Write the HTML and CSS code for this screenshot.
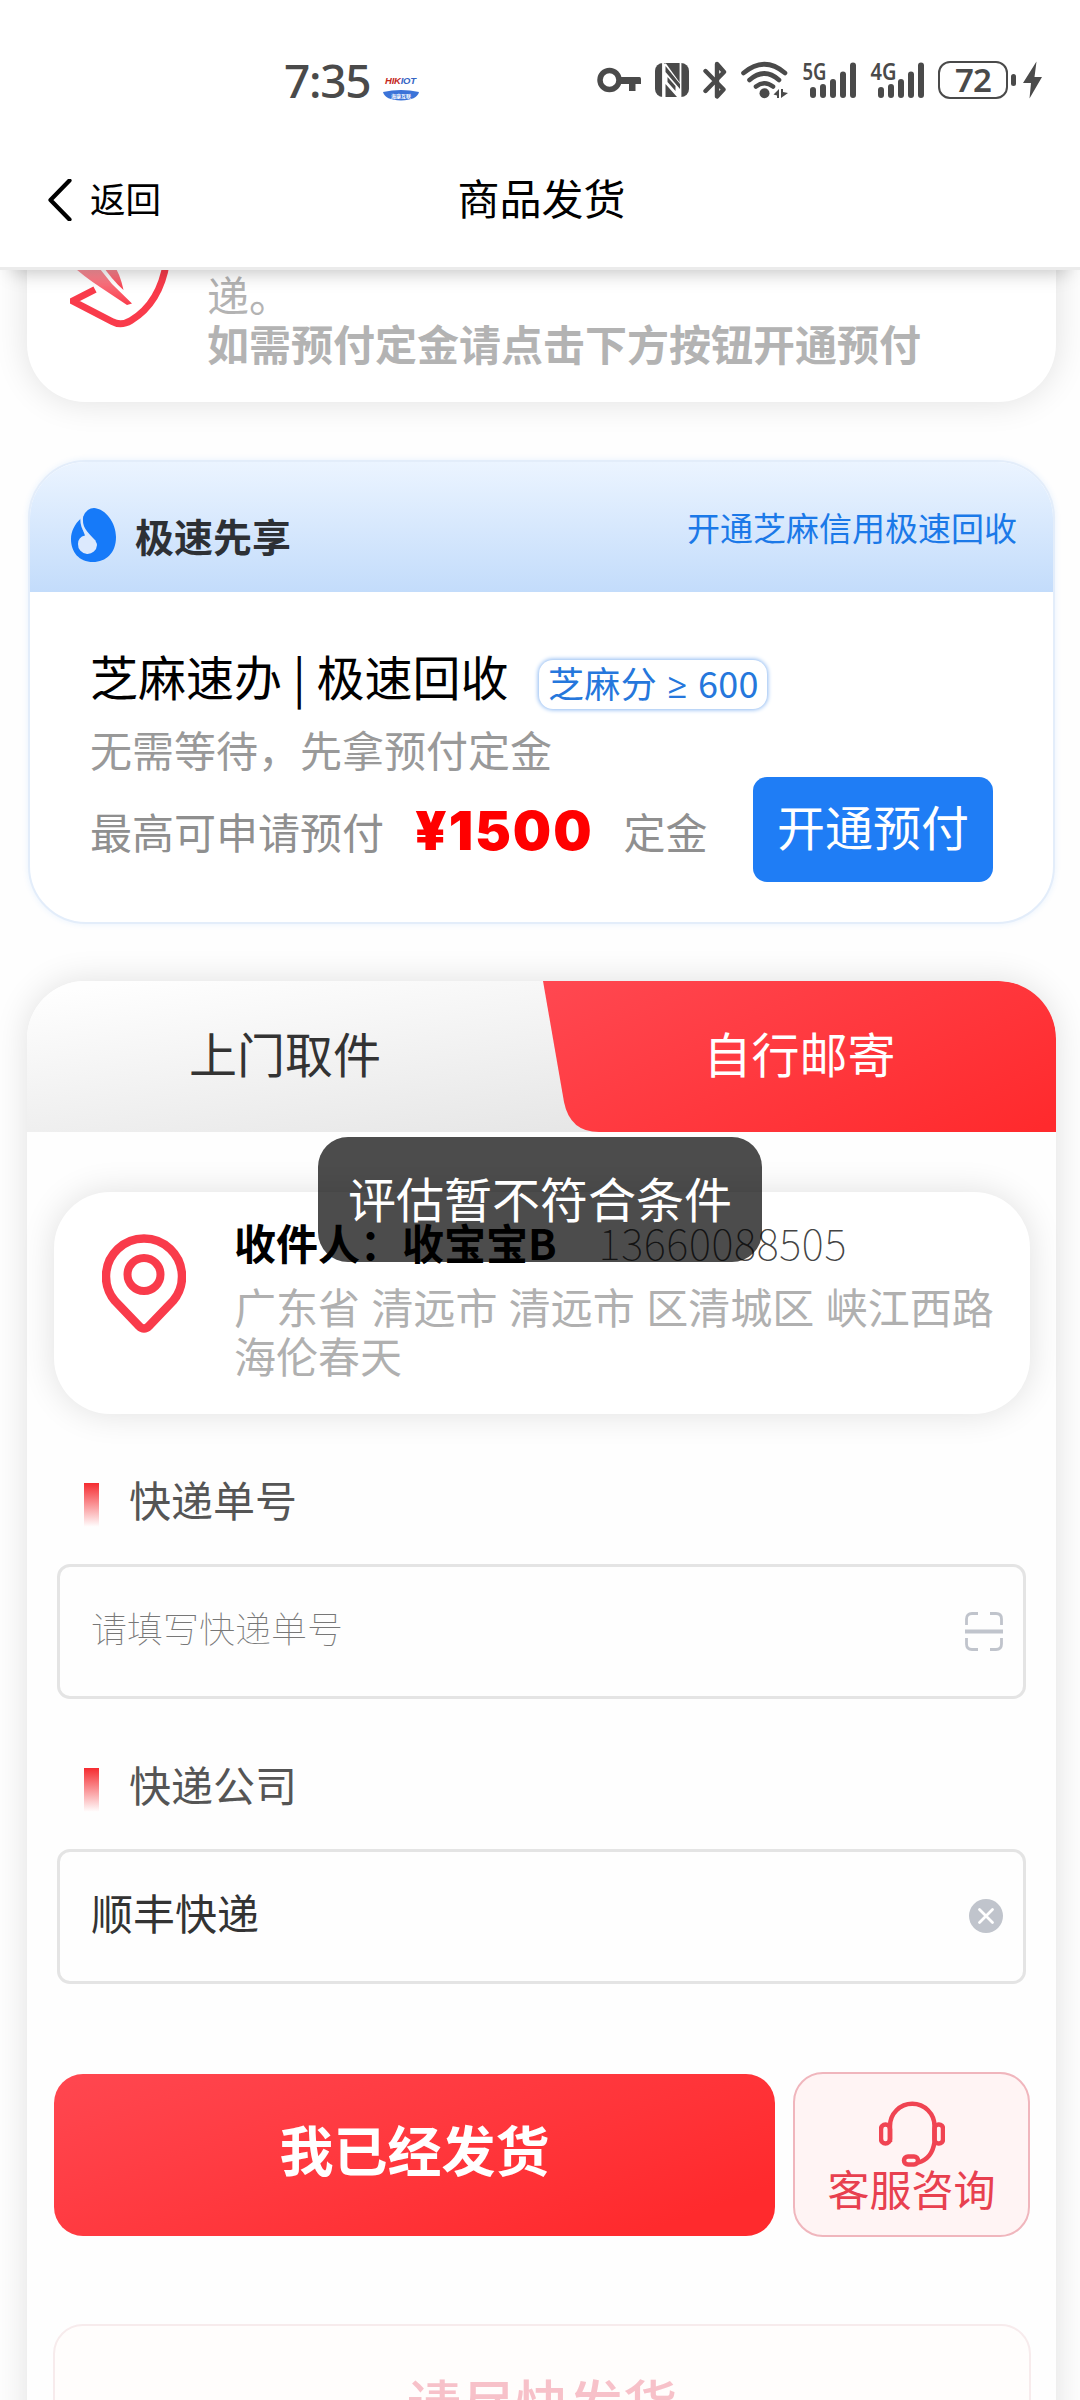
FILE: index.html
```html
<!DOCTYPE html>
<html lang="zh-CN">
<head>
<meta charset="utf-8">
<title>商品发货</title>
<link rel="stylesheet" href="styles.css">
</head>
<body>
<header class="header">
  <div class="status">
    <span class="time">7:35</span>
    <svg class="app" width="36" height="26" viewBox="0 0 36 26">
      <text x="2" y="9" class="app-name" textLength="31"><tspan fill="#c4281c">HIK</tspan><tspan fill="#3565c4">IOT</tspan></text>
      <path d="M0 17Q18 13 36 17Q34 25 18 25.500Q2 25 0 17Z" fill="#3b73d8"/>
      <text x="8" y="22.500" class="app-sub">海康互联</text>
    </svg>
    <div class="indicators">
      <svg width="44" height="38" viewBox="597 61 44 38"><circle cx="609.500" cy="80" r="9.500" fill="none" stroke="#4a4a4a" stroke-width="5.500"/><path d="M620 77H639.500Q641 77 641 79V84H635.500V91H629V84H620Z" fill="#4a4a4a"/></svg>
      <svg width="34" height="38" viewBox="655 61 34 38"><rect x="655" y="63" width="34" height="34" rx="8" fill="#4a4a4a"/><path d="M663 63V97M680.500 63V97" stroke="#fff" stroke-width="1.800"/><path d="M663 63.500L666 63.500L680 83V97L677 97L665.500 84V97L663 97Z" fill="#fff"/><path d="M665.500 66L680 84V89L665.500 72ZM667.500 77L675.500 86V91L667.500 82Z" fill="#4a4a4a"/></svg>
      <svg width="24" height="38" viewBox="703 61 24 38"><path d="M705.500 71L723.500 89.500L717 96.500V64L724 72L705.500 91" fill="none" stroke="#4a4a4a" stroke-width="4.400" stroke-linejoin="round" stroke-linecap="round"/></svg>
      <svg width="47" height="38" viewBox="741 61 47 38"><g fill="none" stroke="#4a4a4a" stroke-width="4.600" stroke-linecap="round"><path d="M743.500 73Q764.500 55.500 785 73"/><path d="M749.500 80Q764.500 67 779 80"/><path d="M756 86.500Q764.500 80 773 86.500"/></g><circle cx="764.500" cy="93.200" r="5" fill="#4a4a4a"/><path d="M779 89V98H777V95.500L773.500 94.500Z M781 98V89H783V92L788 93Z" fill="#4a4a4a"/></svg>
      <svg class="signal" width="54" height="38" viewBox="802 61 54 38"><text x="802.500" y="80" textLength="24" lengthAdjust="spacingAndGlyphs">5G</text><path d="M813 90V95M823 87V95M833 82V95M843 74.500V95M853 65.500V95"/></svg>
      <svg class="signal" width="54" height="38" viewBox="802 61 54 38"><text x="802.500" y="80" textLength="26" lengthAdjust="spacingAndGlyphs">4G</text><path d="M813 90V95M823 87V95M833 82V95M843 74.500V95M853 65.500V95"/></svg>
      <div class="battery"><span class="cell">72</span><i class="nub"></i><svg width="19" height="38" viewBox="1023 61 19 38"><path d="M1036.500 61.500L1023 83H1031L1029.500 98.500L1042 77H1034.500Z" fill="#4a4a4a"/></svg></div>
    </div>
  </div>
  <nav class="nav">
    <a class="back"><svg width="24" height="42" viewBox="0 0 24 42"><path d="M21.500 1.500L2.500 21L21.500 40.500" fill="none" stroke="#000" stroke-width="4.200" stroke-linecap="round" stroke-linejoin="round"/></svg>返回</a>
    <h1 class="title">商品发货</h1>
  </nav>
</header>
<main class="main">
  <section class="card notice">
    <svg class="leaf" width="102" height="70" viewBox="70 260 102 70">
      <defs><linearGradient id="lg" x1="0" y1="0" x2="0" y2="1"><stop offset="0" stop-color="#fba6ae"/><stop offset="1" stop-color="#f93b4b"/></linearGradient></defs>
      <path d="M95 289.500L72.500 301L112 321.500Q121 326.500 131 320.500Q160 303 166.500 262" fill="none" stroke="#f93b4b" stroke-width="7" stroke-linejoin="round"/>
      <path d="M68 262L96 264L112 284L132 303.500L127 305L100 287Q84 277 68 262Z" fill="url(#lg)"/>
      <path d="M100 262H112Q120 273 123.500 290Q112 280 100 262Z" fill="url(#lg)"/>
    </svg>
    <p class="notice-text">递。<br><b>如需预付定金请点击下方按钮开通预付</b></p>
  </section>

  <section class="prepay">
    <div class="prepay-head">
      <svg width="45" height="54" viewBox="0 0 45 54"><path d="M9.300 11L12.500 8Q16 0 23 0C35 1 45 15 45 29C45 45 35 54 22 54C8 54 0 44 0 31C0 23 4 16 9.300 11Z" fill="#167af9"/><path d="M11 7C9 19 14 24 24 34" fill="none" stroke="#dce9fd" stroke-width="2.600"/><path d="M11.500 21Q17 28 22 31Q26 34 26 37A9.500 9.500 0 1 1 7 36Q7 29 14 27.500Z" fill="#dce9fd"/></svg>
      <b class="prepay-name">极速先享</b>
      <a class="prepay-link">开通芝麻信用极速回收</a>
    </div>
    <div class="prepay-body">
      <div class="prepay-title">芝麻速办 | 极速回收<span class="score">芝麻分 <span class="gte">≥</span> 600</span></div>
      <p class="prepay-sub">无需等待，先拿预付定金</p>
      <div class="prepay-row"><span class="grey">最高可申请预付</span><b class="amount">¥1500</b><span class="grey">定金</span><button class="open">开通预付</button></div>
    </div>
  </section>

  <section class="ship">
    <div class="tabs">
      <div class="tab">上门取件</div>
      <div class="tab tab-on"><svg class="tab-bg" width="513" height="151" viewBox="0 0 513 151"><defs><linearGradient id="red" gradientUnits="userSpaceOnUse" x1="20" y1="0" x2="167" y2="306"><stop offset="0" stop-color="#ff4750"/><stop offset="1" stop-color="#ff2a2d"/></linearGradient></defs><path d="M0 0H457A56 56 0 0 1 513 56V151H56Q27 151 21 121Z" fill="url(#red)"/></svg><span class="tab-label">自行邮寄</span></div>
    </div>
    <div class="ship-body">
      <div class="address">
        <svg class="pin" width="84" height="102" viewBox="0 0 84 102"><path d="M37 95L13 70A38 38 0 1 1 71 70L47 95Q42 100 37 95Z" fill="none" stroke="#f93b4b" stroke-width="8.500"/><circle cx="42" cy="43.500" r="16.500" fill="none" stroke="#f93b4b" stroke-width="8"/></svg>
        <div>
          <div class="person"><b>收件人：收宝宝B</b><span class="phone">13660088505</span></div>
          <p class="where">广东省 清远市 清远市 区清城区 峡江西路<br>海伦春天</p>
        </div>
      </div>
      <div class="label">快递单号</div>
      <div class="field"><span class="placeholder">请填写快递单号</span>
        <svg width="38" height="39" viewBox="0 0 38 39"><path d="M1.500 13V7Q1.500 1.500 7 1.500H13M25 1.500H31Q36.500 1.500 36.500 7V13M1.500 26V32Q1.500 37.500 7 37.500H13M25 37.500H31Q36.500 37.500 36.500 32V26" fill="none" stroke="#c0c4cc" stroke-width="2.800"/><path d="M0 19.500H38" stroke="#c0c4cc" stroke-width="4"/></svg>
      </div>
      <div class="label">快递公司</div>
      <div class="field"><span>顺丰快递</span>
        <svg width="34" height="34" viewBox="0 0 34 34"><circle cx="17" cy="17" r="17" fill="#c0c4cc"/><path d="M10.500 10.500L23.500 23.500M23.500 10.500L10.500 23.500" stroke="#fff" stroke-width="2.800" stroke-linecap="round"/></svg>
      </div>
      <div class="actions">
        <button class="sent">我已经发货</button>
        <button class="service"><svg width="66" height="66" viewBox="0 0 66 66"><g fill="none" stroke="#f04452" stroke-width="4.500"><path d="M11 41V25A22 22 0 0 1 55.500 25V41Q53 58 39 61.500"/><rect x="2" y="23.500" width="9" height="19" rx="4.500"/><rect x="55.500" y="23.500" width="8.500" height="19" rx="4"/><rect x="25" y="55.500" width="14" height="8" rx="4"/></g></svg>客服咨询</button>
      </div>
      <div class="hurry">请尽快发货</div>
    </div>
  </section>
</main>
<div class="toast">评估暂不符合条件</div>
</body>
</html>
```

FILE: styles.css
```css
* { box-sizing: border-box; margin: 0; padding: 0; }
body {
  position: relative;
  width: 1080px;
  height: 2400px;
  overflow: hidden;
  background: #fefefe;
  color: #000;
  font-family: "Noto Sans CJK SC", sans-serif;
  font-size: 42px;
}
svg { display: block; flex: none; }
button { border: 0; font: inherit; }

.header {
  position: relative;
  z-index: 2;
  height: 270px;
  background: #fff;
  border-bottom: 3px solid #ebebeb;
  box-shadow: 0 14px 18px -12px rgba(0, 0, 0, .25);
}
.status { display: flex; height: 132px; padding: 61px 38px 0 284px; }
.time { width: 99px; height: 38px; font: 500 46px/38px "Noto Sans", sans-serif; letter-spacing: -1.3px; color: #4a4a4a; }
.app { margin-top: 14px; }
.app-name { font: italic bold 9.500px "Liberation Sans", sans-serif; }
.app-sub { font: bold 5px "Noto Sans CJK SC", sans-serif; fill: #fff; }
.indicators { display: flex; gap: 14px; margin-left: auto; height: 38px; }
.signal { overflow: visible; }
.signal text { font: 600 24px "Noto Sans", sans-serif; fill: #4a4a4a; }
.signal path { stroke: #4a4a4a; stroke-width: 6; stroke-linecap: round; }
.battery { display: flex; align-items: center; }
.cell { width: 70px; height: 38px; border: 2.500px solid #4a4a4a; border-radius: 12px; text-align: center; font: 600 33px/34px "Noto Sans", sans-serif; letter-spacing: -1px; color: #4a4a4a; }
.nub { width: 5px; height: 12px; margin: 0 7px 0 3px; border-radius: 3px; background: #4a4a4a; }
.nav { display: grid; grid-template-columns: 1fr auto 1fr; align-items: center; height: 131px; padding-left: 48px; padding-right: 45px; }
.back { display: flex; align-items: center; gap: 18px; font-size: 35.500px; line-height: 48px; }
.back svg { margin-top: 4px; }
.title { margin-top: -2px; font-size: 42px; font-weight: 400; line-height: 56px; }

.main { padding: 0 24px 0 27px; }
.card { background: #fff; border-radius: 58px; box-shadow: 0 0 34px rgba(0, 0, 0, .12); }
.notice { display: flex; height: 192px; margin-top: -60px; padding: 50px 0 0 43px; gap: 35px; }
.notice-text { padding-top: 9px; color: #b3b3b3; line-height: 49px; }

.prepay { width: 1027px; height: 464px; margin: 58px 0 0 1px; border: 2px solid #e3edfa; border-radius: 58px; overflow: hidden; background: #fff; box-shadow: 0 0 6px rgba(31, 125, 245, .1); }
.prepay-head { display: flex; align-items: center; height: 130px; padding: 16px 36px 0 41px; background: linear-gradient(#ebf4ff, #c3dcfb); }
.prepay-name { margin-left: 19px; font-size: 39px; line-height: 52px; color: #2d3035; }
.prepay-link { margin: -17px 0 0 auto; font-size: 33px; line-height: 44px; color: #1b79e8; }
.prepay-body { padding: 53px 0 0 60px; }
.prepay-title { display: flex; align-items: flex-start; height: 72px; font-size: 48px; line-height: 60px; white-space: pre; }
.score { width: 228px; height: 49px; margin: 15px 0 0 31px; border-radius: 14px; box-shadow: 0 0 4px 1px #8db9f2; text-align: center; font-size: 36px; line-height: 44px; word-spacing: 2px; letter-spacing: .3px; color: #2577dc; }
.gte { font-family: "Open Sans", sans-serif; font-size: 35px; }
.prepay-sub { height: 54px; line-height: 46px; color: #999; margin-top: 9px; }
.prepay-row { display: flex; height: 105px; margin-top: -3px; align-items: center; }
.grey { margin-top: 2px; color: #8f8f8f; line-height: 60px; }
.amount { margin: 2px 30px 0 31px; font: 900 54px/60px Inter, sans-serif; letter-spacing: 1.9px; color: #f00; }
.open { width: 240px; height: 105px; margin-left: auto; margin-right: 60px; border-radius: 14px; background: #1f7df5; color: #fff; font-size: 48px; line-height: 60px; padding-bottom: 9px; }

.ship { height: 1500px; margin-top: 57px; border-radius: 58px; background: #fefefe; box-shadow: 0 0 34px rgba(0, 0, 0, .12); }
.tabs { display: grid; grid-template-columns: 516px 513px; height: 151px; border-radius: 58px 58px 0 0; overflow: hidden; background: linear-gradient(172deg, #fefefe 5%, #e2e2e2 90%); }
.tab { display: grid; place-items: center; font-size: 48px; line-height: 60px; color: #333; padding-bottom: 10px; }
.tab-on { color: #fff; padding: 0; }
.tab-bg, .tab-label { grid-area: 1 / 1; }
.tab-label { padding-bottom: 10px; z-index: 1; }
.ship-body { padding: 60px 26px 0 27px; }
.address { display: flex; height: 222px; padding: 41px 0 0 48px; gap: 48px; border-radius: 56px; background: #fff; box-shadow: 0 0 34px rgba(0, 0, 0, .12); }
.pin { margin-top: -2px; }
.person { display: flex; height: 54px; margin-top: -19px; line-height: 56px; white-space: pre; }
.phone { margin-left: 42px; font-weight: 100; letter-spacing: .7px; color: #444; }
.where { margin-top: 13px; line-height: 49px; color: #b0b0b0; word-spacing: 2px; white-space: nowrap; }
.label { display: flex; align-items: center; height: 60px; margin-top: 55px; padding-left: 30px; line-height: 56px; color: #555; }
.label::before { content: ""; width: 15px; height: 44px; margin: 12px 30px 0 0; background: linear-gradient(#f52b30, #fff); }
.field { display: flex; align-items: center; justify-content: space-between; width: 969px; height: 135px; margin: 35px 0 0 3px; padding: 0 20px 0 31px; border: 3px solid #e4e4e4; border-radius: 13px; color: #333; line-height: 56px; }
.field span { margin-top: -10px; }
.field svg { margin-top: -1px; }
.placeholder { font-size: 36px; font-weight: 100; color: #777; }
.actions { display: flex; justify-content: space-between; align-items: center; height: 165px; margin-top: 88px; }
.sent { width: 721px; height: 162px; border-radius: 29px; background: linear-gradient(160deg, #ff4750, #ff2a2d 88%); color: #fff; font-size: 54px; font-weight: 700; line-height: 70px; padding-bottom: 12px; }
.service { display: flex; flex-direction: column; align-items: center; width: 237px; height: 165px; padding-top: 27px; border: 2px solid #f0b6bd; border-radius: 30px; background: #fff4f4; color: #e8404f; line-height: 41px; }
.hurry { height: 164px; margin: 87px -1px 0; padding-top: 39px; border: 2px solid #f7ebec; border-radius: 30px; background: #fffdfc; text-align: center; color: #f7c1c9; font-size: 54px; font-weight: 500; line-height: 76px; }
.toast { position: absolute; z-index: 3; left: 318px; top: 1137px; width: 444px; height: 125px; border-radius: 30px; background: rgba(0, 0, 0, .7); color: #fff; text-align: center; font-size: 48px; line-height: 120px; }
```
